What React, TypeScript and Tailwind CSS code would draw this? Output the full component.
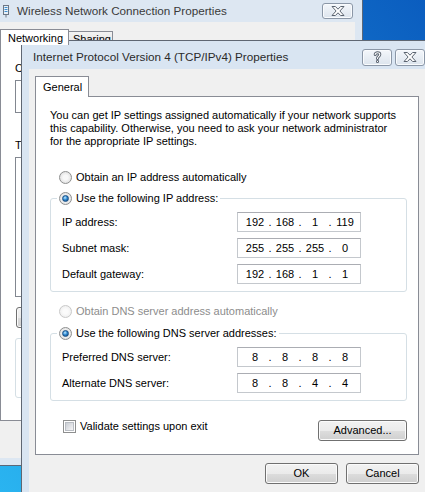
import { Fragment, type ReactNode } from "react";

const pushButton =
  "flex shrink-0 items-center justify-center rounded-[3px] border border-[#707070] bg-[linear-gradient(to_bottom,#f2f2f2_0%,#ebebeb_50%,#dddddd_51%,#cfcfcf_100%)] shadow-[inset_0_0_0_1px_#fbfbfb] leading-[13px] text-black";

function CaptionButton({ children, className }: { children: ReactNode; className: string }) {
  return (
    <div
      className={`flex items-center justify-center rounded-[3px] border border-[#8b97a7] bg-[linear-gradient(to_bottom,#f4f7fb,#dce4ed)] shadow-[inset_0_0_0_1px_#f9fbfd] ${className}`}
    >
      {children}
    </div>
  );
}

function CloseGlyph() {
  return (
    <svg width="14" height="10" viewBox="0 0 14 10">
      <path
        d="M1 .5h3.4l2.6 2.7L9.6.5H13L8.9 5 13 9.5H9.6L7 6.8 4.4 9.5H1L5.1 5z"
        fill="#fff"
        stroke="#5b6470"
        strokeWidth="1"
        strokeLinejoin="round"
      />
    </svg>
  );
}

function HelpGlyph() {
  const curve = "M2.2 3.4C2.2 1.2 6.8 1.2 6.8 3.5 6.8 5.3 4.5 5.4 4.5 7.4";
  return (
    <svg width="9" height="12" viewBox="0 0 9 12" fill="none" strokeLinecap="round">
      <path d={curve} stroke="#5b6470" strokeWidth="3" />
      <path d="M4.5 10.2v.2" stroke="#5b6470" strokeWidth="3" />
      <path d={curve} stroke="#fff" strokeWidth="1.1" />
      <path d="M4.5 10.2v.2" stroke="#fff" strokeWidth="1.1" />
    </svg>
  );
}

// little network adapter glyph in the back window's caption
function AdapterIcon() {
  return (
    <svg width="8" height="13" viewBox="0 0 8 13">
      <rect x="1.5" y="0.5" width="5" height="9" fill="#e9f1f8" stroke="#6d7785" />
      <path d="M2.5 2.5h3M2.5 4.5h3M2.5 6.5h3" stroke="#3f8fd0" />
      <path d="M4 9.5v3" stroke="#6d7785" />
    </svg>
  );
}

function Radio({ checked = false, disabled = false }: { checked?: boolean; disabled?: boolean }) {
  return (
    <span
      className={`flex h-[13px] w-[13px] shrink-0 items-center justify-center rounded-full border ${
        disabled
          ? "border-[#c9c9c9] bg-[radial-gradient(circle,#fbfbfb_30%,#e9e9e9_100%)]"
          : "border-[#8e8f8f] bg-[radial-gradient(circle,#f8f8f8_30%,#d5d5d5_100%)]"
      }`}
    >
      {checked && (
        <span className="h-[7px] w-[7px] rounded-full border border-[#1b4f84] bg-[radial-gradient(circle_at_40%_35%,#c4ebff_0%,#2f8ad3_45%,#0d3d70_100%)]" />
      )}
    </span>
  );
}

function RadioRow({ label, checked, disabled }: { label: string; checked?: boolean; disabled?: boolean }) {
  return (
    <div className="flex h-[13px] items-center gap-[4px]">
      <Radio checked={checked} disabled={disabled} />
      <span className={`leading-[13px] ${disabled ? "text-[#8d8d8d]" : "text-black"}`}>{label}</span>
    </div>
  );
}

function IpField({ parts }: { parts: string[] }) {
  return (
    <div className="flex h-[20px] w-[124px] items-center border border-[#c4c8cd] border-t-[#abadb3] bg-white pl-[4px] leading-[13px]">
      {parts.map((p, i) => (
        <Fragment key={i}>
          {i > 0 && <span className="w-[4px] text-center">.</span>}
          <span className="w-[26px] text-center">{p}</span>
        </Fragment>
      ))}
    </div>
  );
}

function AddressGroup({ legend, rows }: { legend: string; rows: { label: string; parts: string[] }[] }) {
  return (
    <fieldset className="w-[357px] rounded-[3px] border border-[#d5dfe5]">
      <legend className="ml-[6px] px-[2px]">
        <RadioRow label={legend} checked />
      </legend>
      <div className="grid grid-cols-[175px_124px] items-center gap-y-[6px] pl-[11px] pt-[7px] pb-[7px]">
        {rows.map((r) => (
          <Fragment key={r.label}>
            <span className="leading-[13px]">{r.label}</span>
            <IpField parts={r.parts} />
          </Fragment>
        ))}
      </div>
    </fieldset>
  );
}

function WirelessProperties() {
  return (
    <div className="absolute left-[-14px] top-0 flex h-[466px] w-[377px] flex-col border-r border-b border-[#5d6878] bg-[#dde7f2]">
      <div className="flex h-[22px] shrink-0 items-center pl-[16px] pr-[9px]">
        <AdapterIcon />
        <span className="ml-[7px] text-[11.7px] leading-[14px] text-[#3a3a3a]">Wireless Network Connection Properties</span>
        <CaptionButton className="ml-auto h-[16px] w-[31px]">
          <CloseGlyph />
        </CaptionButton>
      </div>
      <div className="mb-[7px] ml-[8px] mr-[7px] flex flex-1 flex-col bg-[#f0f0f0] px-[6px] pt-[7px]">
        <div className="flex h-[15px] items-end">
          <div className="relative z-10 -mb-px h-[16px] w-[69px] border border-b-0 border-[#898c95] bg-white pl-[7px] pt-[2px] leading-[13px]">
            Networking
          </div>
          <div className="h-[13px] w-[44px] border border-b-0 border-l-0 border-[#898c95] bg-[linear-gradient(to_bottom,#f3f3f3,#e4e4e4)] pl-[4px] pt-px leading-[13px]">
            Sharing
          </div>
        </div>
        <div className="flex h-[377px] flex-col border border-[#898c95] bg-white pl-[14px] pt-[17px]">
          <div className="leading-[13px]">Connect using:</div>
          <div className="mt-[5px] h-[33px] w-[320px] border border-[#828790] bg-white" />
          <div className="mt-[26px] leading-[13px]">This connection uses the following items:</div>
          <div className="mt-[5px] h-[140px] w-[320px] border border-[#828790] bg-white" />
          <div className={`${pushButton} ml-px mt-[10px] h-[21px] w-[80px]`}>Install...</div>
          <div className="mt-[10px] h-[60px] w-[320px] rounded-[3px] border border-[#d5dfe5]" />
        </div>
        <div className="mt-[9px] flex justify-end gap-[8px]">
          <div className={`${pushButton} h-[21px] w-[73px]`}>OK</div>
          <div className={`${pushButton} h-[21px] w-[73px]`}>Cancel</div>
        </div>
      </div>
    </div>
  );
}

function Ipv4Properties() {
  return (
    <div className="absolute left-[21px] top-[40px] flex h-[470px] w-[412px] flex-col border border-[#5f6773] bg-[#d9e5f2]">
      <div className="flex h-[28px] shrink-0 items-center pl-[11px] pr-[7px] pt-[4px]">
        <span className="text-[11.7px] leading-[14px] text-[#2a2a2a]">Internet Protocol Version 4 (TCP/IPv4) Properties</span>
        <div className="ml-auto flex gap-[3px]">
          <CaptionButton className="h-[17px] w-[30px]">
            <HelpGlyph />
          </CaptionButton>
          <CaptionButton className="h-[17px] w-[30px]">
            <CloseGlyph />
          </CaptionButton>
        </div>
      </div>
      <div className="mx-[7px] flex flex-1 flex-col bg-[#f0f0f0] px-[6px] pt-[7px]">
        <div className="relative z-10 -mb-px flex h-[21px] w-[54px] items-center border border-b-0 border-[#898c95] bg-white pl-[7px] leading-[13px]">
          General
        </div>
        <div className="flex h-[359px] flex-col border border-[#898c95] bg-white pl-[14px]">
          <div className="pt-[12px] leading-[13px]">
            <div>You can get IP settings assigned automatically if your network supports</div>
            <div>this capability. Otherwise, you need to ask your network administrator</div>
            <div>for the appropriate IP settings.</div>
          </div>
          <div className="ml-[9px] mt-[23px]">
            <RadioRow label="Obtain an IP address automatically" />
          </div>
          <div className="mt-[8px]">
            <AddressGroup
              legend="Use the following IP address:"
              rows={[
                { label: "IP address:", parts: ["192", "168", "1", "119"] },
                { label: "Subnet mask:", parts: ["255", "255", "255", "0"] },
                { label: "Default gateway:", parts: ["192", "168", "1", "1"] },
              ]}
            />
          </div>
          <div className="ml-[9px] mt-[13px]">
            <RadioRow label="Obtain DNS server address automatically" disabled />
          </div>
          <div className="mt-[9px]">
            <AddressGroup
              legend="Use the following DNS server addresses:"
              rows={[
                { label: "Preferred DNS server:", parts: ["8", "8", "8", "8"] },
                { label: "Alternate DNS server:", parts: ["8", "8", "4", "4"] },
              ]}
            />
          </div>
          <div className="mt-[19px] flex w-[357px] items-start justify-between">
            <div className="ml-[13px] flex items-center gap-[4px]">
              <span className="flex h-[13px] w-[13px] items-center justify-center border border-[#8e8f8f] bg-white">
                <span className="h-[9px] w-[9px] border border-[#b9bdc3] bg-[linear-gradient(135deg,#c9cdd3,#f5f5f6)]" />
              </span>
              <span className="leading-[13px]">Validate settings upon exit</span>
            </div>
            <div className={`${pushButton} h-[21px] w-[89px]`}>Advanced...</div>
          </div>
        </div>
        <div className="mt-[8px] flex justify-end gap-[8px]">
          <div className={`${pushButton} h-[21px] w-[73px]`}>OK</div>
          <div className={`${pushButton} h-[21px] w-[73px]`}>Cancel</div>
        </div>
      </div>
    </div>
  );
}

export default function App() {
  return (
    <div className="relative h-[492px] w-[425px] overflow-hidden bg-[linear-gradient(to_bottom_left,#0b5dbf,#2ab4f0)] font-['Liberation_Sans',Arial,sans-serif] text-[11px] text-black">
      <WirelessProperties />
      <Ipv4Properties />
    </div>
  );
}
